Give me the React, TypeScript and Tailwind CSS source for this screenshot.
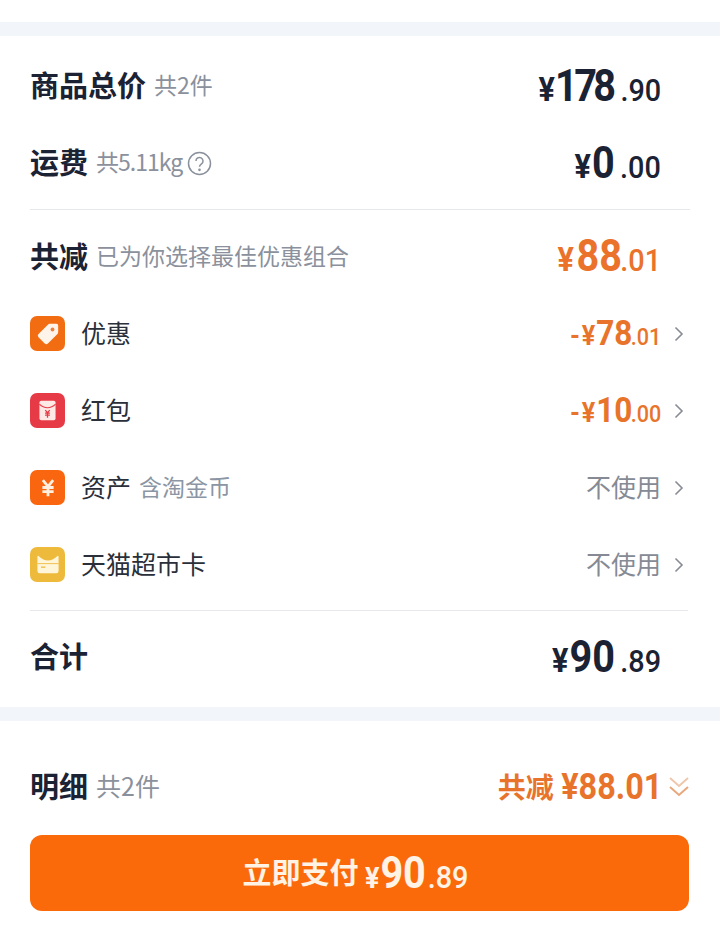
import React from 'react'

const cjk = "font-['Noto_Sans_CJK_SC','Noto_Sans',sans-serif]"
const num = "font-['Roboto','Noto_Sans_CJK_SC',sans-serif]"

// the original numerals are a narrow DIN, so Roboto gets squeezed a bit
const BigPrice = ({ main, cents, color, tight, wide }: { main: string; cents: string; color: string; tight?: boolean; wide?: boolean }) => (
  <span className={`${num} mr-[29px] flex origin-right scale-x-90 items-baseline font-bold leading-none ${color}`}>
    <span className="text-[34px]">¥</span>
    <span className={`text-[44px] ${tight ? 'mr-[3px] tracking-[-4px]' : 'ml-[1px]'} ${wide ? 'ml-[3px]' : ''}`}>{main}</span>
    <span className={`text-[32px] font-medium ${wide ? 'ml-[-2px]' : 'ml-[6px]'}`}>{cents}</span>
  </span>
)

const RowPrice = ({ main, cents }: { main: string; cents: string }) => (
  <span className={`${num} flex origin-right scale-x-90 items-baseline font-bold leading-none text-[#e8742c]`}>
    <span className="mr-[2px] text-[28px]">-</span>
    <span className="text-[28px]">¥</span>
    <span className="ml-[1px] text-[35px]">{main}</span>
    <span className="ml-[-2px] text-[24px] font-medium">{cents}</span>
  </span>
)

const Chevron = () => (
  <svg width="10" height="16" viewBox="0 0 10 16" fill="none" stroke="#868b94" strokeWidth="1.6" className="ml-[13px] mr-[6px]">
    <path d="M1.5 1.5 8 8l-6.500 6.500" />
  </svg>
)

const TagIcon = () => (
  <div className="flex h-[35px] w-[35px] items-center justify-center rounded-[7px] bg-[#f26c12]">
    <svg width="26" height="26" viewBox="0 0 23 23">
      <path d="M13 2.500h6a1.500 1.500 0 0 1 1.500 1.500v6a2 2 0 0 1-.6 1.400l-8.500 8.500a2 2 0 0 1-2.800 0l-5.500-5.500a2 2 0 0 1 0-2.800l8.500-8.500A2 2 0 0 1 13 2.500z" fill="#fff4ea" />
      <circle cx="15.500" cy="7.500" r="1.700" fill="#ec7f3c" />
    </svg>
  </div>
)

const RedPacketIcon = () => (
  <div className="flex h-[35px] w-[35px] items-center justify-center rounded-[7px] bg-[#e63b47]">
    <svg width="17" height="21" viewBox="0 0 19 23">
      <rect x="0.500" y="0.500" width="18" height="22" rx="2" fill="#fde9e6" />
      <path d="M0.500 4.500c3 3 6 4 9 4s6-1 9-4" fill="none" stroke="#e63b47" strokeWidth="1.200" />
      <path d="M7 11l2.500 3L12 11M6.800 14.500h5.400M6.800 16.800h5.400M9.500 14v5.500" fill="none" stroke="#e63b47" strokeWidth="1.400" />
    </svg>
  </div>
)

const YuanIcon = () => (
  <div className="flex h-[35px] w-[35px] items-center justify-center rounded-[7px] bg-[#f9660f]">
    <svg width="14" height="21" viewBox="0 0 15 19" fill="none" stroke="#fff0e0" strokeWidth="3">
      <path d="M2 1.500l5.500 7 5.500-7M1.500 9.500h12M1.500 14h12M7.500 8v11" />
    </svg>
  </div>
)

const CardIcon = () => (
  <div className="flex h-[35px] w-[35px] items-center justify-center rounded-[7px] bg-[#eeba3c]">
    <svg width="22" height="19" viewBox="0 0 25 21">
      <path d="M1.500 0.500C5 4 8.500 6 12.500 6S20 4 23.500 0.500c.6 0 1 .6 1 1.500v16a2.500 2.500 0 0 1-2.500 2.500H3A2.500 2.500 0 0 1 .5 18V2C.5 1.100.9.500 1.500.5z" fill="#fff6da" />
      <path d="M.5 9.500h24" stroke="#eeba3c" strokeWidth="1" />
      <path d="M4.500 13.500h5" stroke="#eeba3c" strokeWidth="1.500" />
    </svg>
  </div>
)

const rows = [
  { icon: <TagIcon />, label: '优惠', main: '78', cents: '.01' },
  { icon: <RedPacketIcon />, label: '红包', main: '10', cents: '.00' },
  { icon: <YuanIcon />, label: '资产', note: '含淘金币' },
  { icon: <CardIcon />, label: '天猫超市卡' },
]

export default function App() {
  return (
    <div className={`${cjk} h-[947px] w-[720px] overflow-hidden bg-white`}>
      <div className="h-[22px] bg-white" />
      <div className="h-[14px] bg-[#f2f5f9]" />

      <section className="h-[671px] px-[30px]">
        <div className="flex h-[100px] items-center justify-between">
          <div className="flex items-center pb-[3px]">
            <span className="text-[29px] leading-none font-bold text-[#1b2233]">商品总价</span>
            <span className="ml-[8px] text-[23px] leading-none text-[#8b919c]">共2件</span>
          </div>
          <BigPrice main="178" cents=".90" color="text-[#1b2233]" tight />
        </div>
        <div className="flex h-[54px] items-center justify-between">
          <div className="flex items-center pb-[3px]">
            <span className="text-[29px] leading-none font-bold text-[#1b2233]">运费</span>
            <span className="ml-[8px] text-[23px] leading-none tracking-[-1px] text-[#8b919c]">共5.11kg</span>
            <svg width="25" height="25" viewBox="0 0 25 25" fill="none" stroke="#8b919c" strokeWidth="1.500" className="ml-[5px] mt-[3px]">
              <circle cx="12.500" cy="12.500" r="11" />
              <path d="M9 10a3.500 3.500 0 1 1 5.500 2.800c-1.300.9-2 1.500-2 3" />
              <circle cx="12.500" cy="18.800" r="0.600" />
            </svg>
          </div>
          <BigPrice main="0" cents=".00" color="text-[#1b2233]" />
        </div>
        <div className="mt-[19px] h-px bg-[#e6e8eb]" />

        <div className="flex h-[85px] items-start justify-between pt-[24px]">
          <div className="mt-[7px] flex items-center">
            <span className="text-[29px] leading-none font-bold text-[#1b2233]">共减</span>
            <span className="ml-[8px] text-[23px] leading-none text-[#8b919c]">已为你选择最佳优惠组合</span>
          </div>
          <BigPrice main="88" cents=".01" color="text-[#ea722a]" wide />
        </div>

        {rows.map((row) => (
          <div key={row.label} className="flex h-[77px] items-center justify-between">
            <div className="flex items-center">
              {row.icon}
              <span className="mb-[3px] ml-[16px] text-[25px] leading-none text-[#2a2f3a]">{row.label}</span>
              {row.note && <span className="mb-[3px] ml-[8px] text-[23px] leading-none text-[#8b95a3]">{row.note}</span>}
            </div>
            <div className="flex items-center">
              {row.main ? (
                <RowPrice main={row.main} cents={row.cents ?? ''} />
              ) : (
                <span className="mb-[3px] text-[25px] leading-none text-[#858a94]">不使用</span>
              )}
              <Chevron />
            </div>
          </div>
        ))}

        <div className="mt-[7px] mr-[2px] h-px bg-[#e6e8eb]" />
        <div className="flex h-[92px] items-center justify-between">
          <span className="pb-[3px] text-[29px] leading-none font-bold text-[#1b2233]">合计</span>
          <BigPrice main="90" cents=".89" color="text-[#1b2233]" />
        </div>
      </section>

      <div className="h-[14px] bg-[#f2f5f9]" />

      <section className="px-[30px]">
        <div className="flex h-[114px] items-center justify-between pt-[18px]">
          <div className="flex items-center pb-[3px]">
            <span className="text-[29px] leading-none font-bold text-[#1b2233]">明细</span>
            <span className="ml-[8px] text-[25px] leading-none text-[#8b919c]">共2件</span>
          </div>
          <div className="flex items-center text-[#e8742c]">
            <span className="mb-[3px] text-[28px] leading-none font-bold">共减</span>
            <span className={`${num} ml-[-4px] origin-right scale-x-90 text-[36px] leading-none font-bold`}>¥88.01</span>
            <svg width="22" height="24" viewBox="0 0 22 24" fill="none" strokeWidth="2" className="ml-[6px]">
              <path d="M2 3l9 8 9-8" stroke="#eec7ac" />
              <path d="M2 12l9 8 9-8" stroke="#e8a87c" />
            </svg>
          </div>
        </div>
        <button className="flex h-[76px] w-[659px] items-center justify-center rounded-[12px] bg-[#fb6a0a] pl-[3px] text-[#fff3e6]">
          <span className="mb-[3px] text-[29px] leading-none font-bold">立即支付</span>
          <span className={`${num} ml-[6px] flex origin-left scale-x-90 items-baseline font-bold leading-none`}>
            <span className="text-[30px]">¥</span>
            <span className="ml-[1px] text-[44px]">90</span>
            <span className="ml-[2px] text-[32px] font-medium">.89</span>
          </span>
        </button>
      </section>
    </div>
  )
}
